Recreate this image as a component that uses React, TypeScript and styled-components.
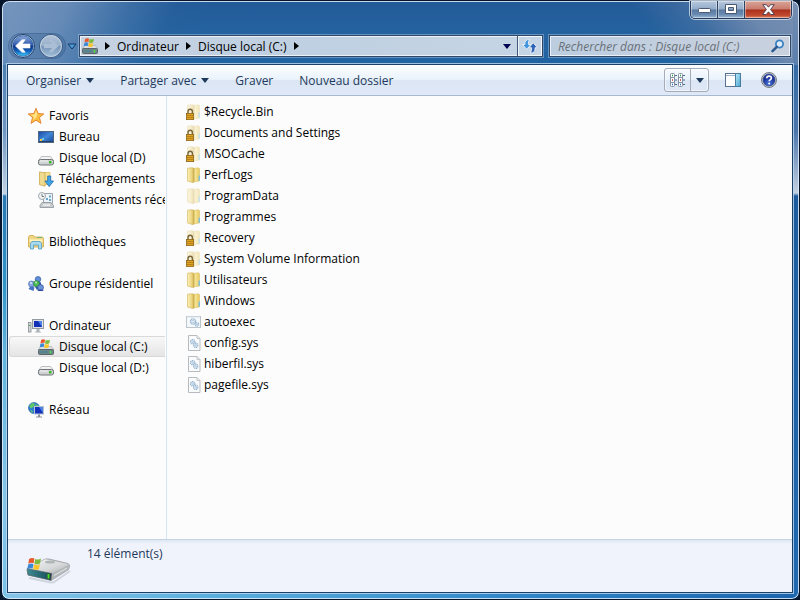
import React from "react";
import styled, { createGlobalStyle, css } from "styled-components";

const GlobalStyle = createGlobalStyle`
  * { box-sizing: border-box; }
  body { margin: 0; background: #06152c; font-family: "Open Sans", "Noto Sans", sans-serif; font-size: 12px; color: #000; }
  button, input { font: inherit; color: inherit; margin: 0; }
  button { padding: 0; border: 0; background: none; }
  svg { display: block; flex: none; }
`;

const Window = styled.div`
  display: flex;
  flex-direction: column;
  min-height: 100vh;
  margin-left: 1px;
  padding: 0 6px 6px 5px;
  border: 1px solid #07142a;
  border-radius: 8px;
  box-shadow: inset 0 0 0 1px rgba(226, 238, 250, 0.85);
  background:
    linear-gradient(to bottom, rgba(112, 144, 184, 0) 0, #5c89b9 90px, #6f96c1 130px, #c3d3e4 193px, #2777b3 195px, #3195c6 285px, #5fb4dd 350px, #86c5e8 500px, #79c0e8 100%) left / 6px 100% no-repeat,
    linear-gradient(to bottom, rgba(111, 136, 174, 0) 0, #4a75ab 130px, #c3d1e2 192px, #1c5c9e 195px, #2069b0 100%) right / 6px 100% no-repeat,
    linear-gradient(to right, #86c5e8 0, #5cb0de 25%, #2f86c8 65%, #1c64ae 100%) bottom / 100% 7px no-repeat,
    linear-gradient(115deg, #7595bd 0, rgba(110, 144, 186, 0.9) 60px, rgba(80, 125, 175, 0.6) 115px, rgba(45, 100, 160, 0.2) 160px, rgba(32, 90, 152, 0) 195px) left top / 300px 64px no-repeat,
    linear-gradient(50deg, rgba(32, 90, 152, 0) 140px, rgba(85, 120, 165, 0.5) 180px, rgba(112, 138, 175, 0.95) 225px, #7890b2 270px) right top / 300px 64px no-repeat,
    linear-gradient(to bottom, #235a98, #24639f 34px, #2063a2 64px);
`;

const TitleBar = styled.header`
  display: flex;
  justify-content: flex-end;
  height: 33px;
  padding-right: 1px;
`;

const CaptionButtons = styled.div`
  display: flex;
  height: 18px;
  border: 1px solid #273c5c;
  border-top: 0;
  border-radius: 0 0 5px 5px;
  box-shadow: 0 0 0 1px rgba(220, 232, 245, 0.75);
  overflow: hidden;
`;

const CaptionButton = styled.button<{ $close?: boolean }>`
  display: grid;
  place-items: center;
  width: ${(p) => (p.$close ? 46 : 27)}px;
  border-right: ${(p) => (p.$close ? "0" : "1px solid #2c4364")};
  box-shadow: inset 0 0 0 1px rgba(255, 255, 255, 0.4);
  background: ${(p) =>
    p.$close
      ? "linear-gradient(#d9a599 0, #c97b6c 48%, #a92f1c 52%, #c24a30 85%, #de8a6c 100%)"
      : "linear-gradient(#b6c8dd 0, #93abc9 48%, #58789f 52%, #6b8cb2 80%, #9bb8d4 100%)"};
`;

const NavBar = styled.div`
  display: flex;
  align-items: center;
  height: 30px;
  padding: 0 2px 6px;
`;

const HistoryButtons = styled.div`
  display: flex;
  align-items: center;
  gap: 2px;
  width: 70px;
  height: 24px;
`;

const History = styled.div`
  display: flex;
  gap: 4px;
  padding: 0 2px;
  border-radius: 13px;
  box-shadow: 0 0 0 1px rgba(30, 66, 112, 0.4);
  background: rgba(50, 95, 145, 0.3);
`;

const fieldBox = css`
  display: flex;
  align-items: stretch;
  height: 22px;
  min-width: 0;
  border: 1px solid #30486a;
  box-shadow: 0 0 0 1px rgba(180, 205, 230, 0.45), inset 0 0 0 1px rgba(245, 249, 253, 0.8);
`;

const AddressBar = styled.nav`
  ${fieldBox}
  flex: 1;
  margin-right: 6px;
  background: linear-gradient(to right, #c6d2e1, #bfd0e2 50%, #c5d5e5);
`;

const Crumbs = styled.div`
  display: flex;
  flex: 1;
  align-items: center;
  min-width: 0;
  padding-left: 2px;
`;

const Crumb = styled.button`
  padding: 0 7px;
  white-space: nowrap;
`;

const FieldButton = styled.button<{ $divided?: boolean }>`
  display: grid;
  place-items: center;
  width: ${(p) => (p.$divided ? 25 : 20)}px;
  border-left: ${(p) => (p.$divided ? "1px solid #43597a" : "0")};
  box-shadow: ${(p) => (p.$divided ? "inset 0 0 0 1px rgba(245, 249, 253, 0.8)" : "none")};
`;

const SearchBox = styled.form`
  ${fieldBox}
  flex: 0 1 242px;
  padding-right: 2px;
  background: linear-gradient(to right, #bccde0, #c9d1de);
`;

const SearchInput = styled.input`
  flex: 1;
  min-width: 0;
  padding: 0 0 0 8px;
  border: 0;
  outline: 0;
  background: none;
  &::placeholder {
    color: #6a7178;
    font-style: italic;
    opacity: 1;
  }
`;

const Client = styled.div`
  display: flex;
  flex: 1;
  flex-direction: column;
  border: 1px solid #1c4168;
  box-shadow: 0 0 0 1px rgba(190, 216, 240, 0.8);
  background: #fcfcfc;
`;

const Toolbar = styled.div`
  display: flex;
  align-items: center;
  height: 31px;
  padding: 0 11px 0 5px;
  border-bottom: 1px solid #a9b9d1;
  background: linear-gradient(#fdfeff 0, #e9f2fb 48%, #dbe6f4 52%, #dfe8f6 100%);
  color: #1e395b;
`;

const Command = styled.button`
  display: flex;
  align-items: center;
  gap: 5px;
  padding: 0 13px;
  white-space: nowrap;
`;

const ToolGroup = styled.div`
  display: flex;
  align-items: center;
  gap: 12px;
  margin-left: auto;
`;

const ViewSplit = styled.div`
  display: flex;
  height: 24px;
  border: 1px solid #a4acba;
  border-radius: 3px;
  box-shadow: inset 0 0 0 1px rgba(255, 255, 255, 0.6);
`;

const ViewButton = styled.button<{ $divided?: boolean }>`
  display: grid;
  place-items: center;
  width: ${(p) => (p.$divided ? 18 : 25)}px;
  border-left: ${(p) => (p.$divided ? "1px solid #a4acba" : "0")};
`;

const IconButton = styled.button`
  display: grid;
  place-items: center;
  width: 24px;
  height: 24px;
`;

const Body = styled.div`
  display: flex;
  flex: 1;
`;

const Sidebar = styled.nav`
  display: flex;
  flex: 0 0 159px;
  flex-direction: column;
  gap: 21px;
  padding: 9px 1px 0;
  border-right: 1px solid #d6e5f5;
  overflow: hidden;
`;

const PlainList = styled.ul`
  margin: 0;
  padding: 0;
  list-style: none;
`;

const TreeItem = styled.a<{ $child?: boolean; $selected?: boolean }>`
  display: flex;
  align-items: center;
  gap: 5px;
  height: 21px;
  padding-left: ${(p) => (p.$child ? 28 : 18)}px;
  border: 1px solid ${(p) => (p.$selected ? "#d9d9d9" : "transparent")};
  border-right: 0;
  border-radius: 3px 0 0 3px;
  background: ${(p) => (p.$selected ? "linear-gradient(#f8f8f8, #e5e5e5)" : "none")};
  color: #000;
  text-decoration: none;
  white-space: nowrap;
  overflow: hidden;
`;

const Files = styled(PlainList)`
  flex: 1;
  padding: 5px 0 0 19px;
`;

const FileLink = styled.a`
  display: inline-flex;
  align-items: center;
  gap: 2px;
  height: 21px;
  color: #000;
  text-decoration: none;
  white-space: nowrap;
  vertical-align: top;
`;

const FileRow = styled.li`
  height: 21px;
`;

const Details = styled.footer`
  display: flex;
  gap: 15px;
  height: 53px;
  padding: 4px 18px 0;
  border-top: 1px solid #c5d3e4;
  background: linear-gradient(#dce6f2 0, #f0f3fb 4px);
  color: #1e395b;
  line-height: 20px;
`;

const DetailsIcon = styled.div`
  padding-top: 12px;
`;

const Triangle = ({ color = "#1e395b" }: { color?: string }) => (
  <svg width="8" height="5" viewBox="0 0 8 5"><path d="M0 0h8L4 5z" fill={color} /></svg>
);

const CrumbArrow = () => (
  <svg width="5" height="8" viewBox="0 0 5 8"><path d="M0 0v8l5-4z" fill="#000" /></svg>
);

const BackIcon = () => (
  <svg width="24" height="24" viewBox="0 0 24 24">
    <defs>
      <linearGradient id="backFill" x1="0" y1="0" x2="0" y2="1">
        <stop offset="0" stopColor="#8aa9da" /><stop offset=".46" stopColor="#2c57ad" />
        <stop offset=".5" stopColor="#0b2f80" /><stop offset=".75" stopColor="#1262bd" /><stop offset="1" stopColor="#3fd0fa" />
      </linearGradient>
    </defs>
    <circle cx="12" cy="12" r="11.5" fill="#c5daee" stroke="#1d3c6c" />
    <circle cx="12" cy="12" r="10.2" fill="url(#backFill)" stroke="#1b4a92" strokeWidth=".6" />
    <path d="M4.500 12l6.500-6.300h3.200L11.200 10H19v4h-7.800l3 4.300H11z" fill="#fff" stroke="#fff" strokeWidth=".6" />
  </svg>
);

const ForwardIcon = () => (
  <svg width="24" height="24" viewBox="0 0 24 24">
    <defs>
      <linearGradient id="forwardFill" x1="0" y1="0" x2="0" y2="1">
        <stop offset="0" stopColor="#b3c4d8" /><stop offset=".48" stopColor="#98b0cb" />
        <stop offset=".52" stopColor="#7896b9" /><stop offset="1" stopColor="#a3c0da" />
      </linearGradient>
    </defs>
    <circle cx="12" cy="12" r="11.5" fill="url(#forwardFill)" stroke="#36557e" />
    <circle cx="12" cy="12" r="10.5" fill="none" stroke="#c2d2e3" />
    <path d="M19.500 12L13 5.700h-3l3 4.300H5v4h8l-3 4.300h3z" fill="#aabfd5" />
  </svg>
);

const RecentIcon = () => (
  <svg width="10" height="7" viewBox="0 0 10 7"><path d="M1 1h8L5 6z" fill="#4d9ed8" stroke="#12376b" /></svg>
);

const MinimizeIcon = () => (
  <svg width="13" height="9" viewBox="0 0 13 9"><rect x=".5" y="3.500" width="12" height="4" rx="1" fill="#fff" stroke="#4b5870" /></svg>
);

const MaximizeIcon = () => (
  <svg width="12" height="11" viewBox="0 0 12 11">
    <path fillRule="evenodd" d="M.5.5h11v9H.5zM3.500 3.500v3h5v-3z" fill="#fff" stroke="#4b5870" />
  </svg>
);

const CloseIcon = () => (
  <svg width="13" height="12" viewBox="0 0 13 12">
    <path d="M.8.7h3.600l2.100 2.500L8.600.7h3.600L8.600 5.500l3.800 5H8.700L6.500 7.800l-2.200 2.700H.6l3.800-5z" fill="#fff" stroke="#574154" />
  </svg>
);

const RefreshIcon = () => (
  <svg width="16" height="16" viewBox="0 0 16 16">
    <path d="M7.500 1.500C4 1.500 2.700 3.500 2.900 6.500H.6L4.700 11.300 8.900 6.500H6.400C6.200 4.500 6.600 3 7.500 1.500z" fill="#3e94de" stroke="#f1f7fc" strokeWidth=".8" />
    <path d="M8.500 15c3.500 0 4.700-2 4.500-5.300h2.400L11.200 4.800 7 9.700h2.600c.2 2-.2 3.700-1.100 5.300z" fill="#2d62b5" stroke="#f1f7fc" strokeWidth=".8" />
  </svg>
);

const SearchIcon = () => (
  <svg width="14" height="14" viewBox="0 0 14 14">
    <circle cx="8.500" cy="5" r="3.600" fill="#dcecf8" stroke="#3a80c0" strokeWidth="1.800" />
    <path d="M5.800 7.800L1.500 12.200" stroke="#28588e" strokeWidth="2.400" strokeLinecap="round" />
  </svg>
);

const ViewIcon = () => (
  <svg width="16" height="14" viewBox="0 0 16 14">
    {[0, 8].map((x) => (
      <g key={x} transform={`translate(${x} 0)`}>
        <rect x=".5" y=".5" width="4" height="13" rx="1" fill="#fff" stroke="#8291a5" />
        <path d="M1 4.500h3M1 9.500h3" stroke="#8291a5" />
        <path d="M5 2.500h2M5 7h2M5 11.500h2" stroke="#536b89" />
        <path d="M2 2.500h1" stroke="#31953a" strokeWidth="1.500" />
        <path d="M2 7h1" stroke="#d0302d" strokeWidth="1.500" />
        <path d="M2 11.500h1" stroke="#2e68bb" strokeWidth="1.500" />
      </g>
    ))}
  </svg>
);

const PreviewIcon = () => (
  <svg width="16" height="14" viewBox="0 0 16 14">
    <defs><linearGradient id="pane" x2="1" y2="1"><stop stopColor="#bfe8f7" /><stop offset="1" stopColor="#44a7d2" /></linearGradient></defs>
    <rect x=".5" y=".5" width="15" height="13" fill="#fff" stroke="#587291" />
    <path d="M1 2.500h9" stroke="#a0b5ca" />
    <rect x="10.500" y=".5" width="5" height="13" fill="url(#pane)" stroke="#4a7c9f" />
  </svg>
);

const HelpIcon = () => (
  <svg width="16" height="16" viewBox="0 0 16 16">
    <defs><radialGradient id="help" cy=".8"><stop stopColor="#4775dd" /><stop offset="1" stopColor="#1d3697" /></radialGradient></defs>
    <circle cx="8" cy="8" r="7.500" fill="#c5c8cc" stroke="#777d86" />
    <circle cx="8" cy="8" r="6" fill="url(#help)" stroke="#27408a" strokeWidth=".6" />
    <path d="M5.700 6.200C5.800 3.300 10.400 3.400 10.400 6c0 1.600-2.200 1.700-2.200 3.300" fill="none" stroke="#fff" strokeWidth="1.700" />
    <circle cx="8.200" cy="11.500" r="1" fill="#fff" />
  </svg>
);

const Flag = () => (
  <g>
    <path d="M1.500 1.500Q3.500.2 5.300 1.200L4.700 4.600Q2.800 3.800.9 5z" fill="#e8582c" />
    <path d="M5.900 1.400Q8 2.400 10 1.200L9.300 4.800Q7.300 5.900 5.200 4.900z" fill="#7dba3c" />
    <path d="M.8 5.500Q2.700 4.300 4.600 5.200L4 8.600Q2.200 7.800.2 9z" fill="#3c87d6" />
    <path d="M5.100 5.500Q7.200 6.500 9.200 5.400L8.500 9Q6.500 10 4.500 9z" fill="#fbc52c" />
  </g>
);

const SystemDrive = () => (
  <svg width="16" height="16" viewBox="0 0 16 16">
    <path d="M2.500 7.500h11l2.300 3.500H.2z" fill="#dcdedf" stroke="#9b9fa1" strokeWidth=".5" />
    <rect x=".5" y="10.500" width="15" height="5" rx="1" fill="#6b858b" stroke="#5b666b" />
    <path d="M2 13h8" stroke="#3c8494" />
    <path d="M12.500 12v2.500" stroke="#46e13b" strokeWidth="1.500" />
    <g transform="translate(1.500 -.5) scale(1.050 1)"><Flag /></g>
  </svg>
);

const Drive = () => (
  <svg width="16" height="16" viewBox="0 0 16 16">
    <path d="M3.500 6.500h9l3 4H.5z" fill="#f4f4f4" stroke="#bcbebf" />
    <rect x=".5" y="9.500" width="15" height="5.500" rx="2" fill="#cfd2d2" stroke="#6f7377" />
    <path d="M2 11h8" stroke="#f5f5f5" />
    <rect x="11" y="11" width="2.500" height="2.500" fill="#37bd23" />
  </svg>
);

const Star = () => (
  <svg width="16" height="16" viewBox="0 0 16 16">
    <path d="M8 .3l2.200 5.200 5.600.4-4.300 3.600 1.500 5.900L8 12.200l-5 3.200 1.500-5.900L.2 5.900l5.600-.4z" fill="#fbbf3e" stroke="#e08030" strokeWidth=".9" strokeLinejoin="round" />
    <path d="M8 2.500l1.400 4L8 10 5 12l1-3.200L2.500 6.700l4-.3z" fill="#ffe48c" />
  </svg>
);

const Desktop = () => (
  <svg width="16" height="16" viewBox="0 0 16 16">
    <defs><linearGradient id="desk" x2="1" y2="1"><stop stopColor="#1a4aa6" /><stop offset=".5" stopColor="#4186d8" /><stop offset="1" stopColor="#164492" /></linearGradient></defs>
    <rect x=".5" y="2.500" width="15" height="11" fill="url(#desk)" stroke="#50657f" />
    <path d="M1 12.500h14" stroke="#23416d" />
    <path d="M2 10h2v2H2z" fill="#f4c746" /><path d="M4 9h2v2H4z" fill="#67c8e8" />
  </svg>
);

const Downloads = () => (
  <svg width="16" height="16" viewBox="0 0 16 16">
    <path d="M6 1.500h6v12H6z" fill="#f6e396" stroke="#d9bb60" strokeWidth=".8" />
    <path d="M1.500.9l5.500 1v13.300l-5.500-1.500z" fill="#efdb8f" stroke="#cda94d" strokeWidth=".8" />
    <path d="M9.700 5h3v5h2.800L11.200 15.600 7 10h2.700z" fill="#42a5e5" stroke="#1b68ad" strokeWidth=".8" />
  </svg>
);

const Recent = () => (
  <svg width="16" height="16" viewBox="0 0 16 16">
    <path d="M5.500 1.500h9v10h-9z" fill="#edf5fb" stroke="#98a3ad" />
    <path d="M8 6h2v2H8zM11 3.500h2v2h-2zM11 7h2v2h-2z" fill="#69a6cf" />
    <circle cx="4" cy="4" r="3.500" fill="#f1f3f4" stroke="#a1a8ae" /><path d="M4 2v2.500h2" fill="none" stroke="#59646f" strokeWidth=".8" />
    <path d="M4 10.500h9l2.500 3v2H2v-2z" fill="#c9cdd0" stroke="#8b9196" strokeWidth=".8" /><path d="M5 13h7" stroke="#fff" />
  </svg>
);

const Library = () => (
  <svg width="16" height="16" viewBox="0 0 16 16">
    <path d="M.5 3l1-1.500h4L6.500 3h8l1 1v9h-15z" fill="#f0d785" stroke="#cfa746" strokeWidth=".8" />
    <path d="M1.500 5.500h13v2h-13z" fill="#fff4c1" /><path d="M9 3.500h5" stroke="#75b776" />
    <path d="M2.500 15V9.500l1.500-2h8l1.500 2V15H10.500v-4h-5v4z" fill="#a8dbf0" stroke="#4f9cc2" strokeWidth=".8" />
  </svg>
);

const HomeGroup = () => (
  <svg width="16" height="16" viewBox="0 0 16 16">
    <circle cx="10" cy="3.300" r="2.800" fill="#608fd8" stroke="#2b4f9e" strokeWidth=".6" />
    <path d="M5.500 8.500Q5.500 5 9 5l4 1.500v5L9 14z" fill="#3159ac" />
    <circle cx="3.500" cy="8" r="3" fill="#86a8e0" stroke="#3b60b0" strokeWidth=".6" />
    <path d="M.5 13q2-4 6-1.500l-1 3.500z" fill="#4772c2" />
    <circle cx="8.500" cy="7.700" r="3" fill="#4ebb54" stroke="#218036" strokeWidth=".6" />
    <circle cx="12.500" cy="11.500" r="3" fill="#6b91d6" stroke="#243f95" strokeWidth=".6" />
    <path d="M9 15q3.500-3 7 0z" fill="#25439b" /><circle cx="3" cy="7" r="1" fill="#dae7fa" /><circle cx="8" cy="6.500" r="1" fill="#b9edb6" />
  </svg>
);

const Computer = () => (
  <svg width="16" height="16" viewBox="0 0 16 16">
    <rect x=".5" y="4.500" width="2.500" height="9.500" fill="#d5d8db" stroke="#858b90" strokeWidth=".8" /><path d="M1 7.500h1.500" stroke="#49ad4b" />
    <rect x="4.500" y="1.500" width="11" height="9" fill="#dfe2e5" stroke="#929aa2" />
    <path d="M6 3h8v6H6z" fill="#1230b7" /><path d="M10 3h4v6z" fill="#4f83e6" />
    <path d="M8.500 11h3v2l2 1.500h-7l2-1.500z" fill="#adb3b8" />
  </svg>
);

const Network = () => (
  <svg width="16" height="16" viewBox="0 0 16 16">
    <circle cx="6" cy="6" r="5.500" fill="#2c7fd7" stroke="#1b519e" strokeWidth=".6" />
    <path d="M1 4l3-3 3 .5-1 3-3 2zM8 2l3 2-2 2-2-1zM2 8l3 1-1 2z" fill="#62c76a" />
    <rect x="6.500" y="4.500" width="9" height="7.500" fill="#1331ba" stroke="#b7c2d1" /><path d="M11 5h4v6z" fill="#4c83e5" />
    <path d="M10 12.500h2v2h2v1H8v-1h2z" fill="#888f98" />
  </svg>
);

const Folder = ({ faded, locked }: { faded?: boolean; locked?: boolean }) => (
  <svg width="16" height="16" viewBox="0 0 16 16">
    <defs>
      <linearGradient id="folderLeft" x2="1"><stop stopColor="#fbf1b8" /><stop offset=".7" stopColor="#e9d17b" /><stop offset="1" stopColor="#c9a94b" /></linearGradient>
      <linearGradient id="folderRight" x2="1"><stop stopColor="#cdb154" /><stop offset=".4" stopColor="#f6e596" /><stop offset="1" stopColor="#e6c75f" /></linearGradient>
    </defs>
    <g opacity={faded ? 0.42 : 1}>
      <path d="M6.500 1.500l6-.7 1 1V14l-7 1z" fill="url(#folderRight)" stroke="#dcbf62" strokeWidth=".6" />
      <path d="M12.500 8.500H14v5l-1.500.5z" fill="#7dbfe0" />
      <path d="M1.500 1.200l5-.5 1.500 1v13.500l-1.500.3-5-1.500z" fill="url(#folderLeft)" stroke="#d2b256" strokeWidth=".6" />
    </g>
    {locked && (
      <g>
        <path d="M2 10V7.500a2.200 2.200 0 0 1 4.400 0V10" fill="none" stroke="#77643a" strokeWidth="1.400" />
        <rect x=".4" y="9.400" width="7.200" height="6.200" fill="#dfa522" stroke="#8e641b" strokeWidth=".8" />
        <path d="M1 11.500h6M1 13.500h6" stroke="#a97618" strokeWidth=".8" />
      </g>
    )}
  </svg>
);

const Gear = ({ x, y, r }: { x: number; y: number; r: number }) => (
  <g stroke="#8fafcc" fill="#edf4fa">
    <circle cx={x} cy={y} r={r} strokeWidth="1.100" strokeDasharray="1.200 .5" />
    <circle cx={x} cy={y} r={r - 1.300} strokeWidth=".6" />
  </g>
);

const Batch = () => (
  <svg width="16" height="16" viewBox="0 0 16 16">
    <rect x=".5" y="2.500" width="14" height="11" fill="#f6f9fb" stroke="#bdc5cc" /><path d="M1 3h13" stroke="#dbe3eb" />
    <Gear x={7} y={7.500} r={2.700} /><Gear x={11} y={10.500} r={1.800} />
  </svg>
);

const SystemFile = () => (
  <svg width="16" height="16" viewBox="0 0 16 16">
    <path d="M2.500.5h8.500l3 3v12H2.500z" fill="#fafbfc" stroke="#b7bbbf" /><path d="M11 .5v3h3" fill="#e5e8ea" stroke="#c3c7ca" />
    <Gear x={6.700} y={6.700} r={2.200} /><Gear x={9.700} y={10.300} r={2.200} />
  </svg>
);

const LargeDrive = () => (
  <svg width="46" height="30" viewBox="0 0 46 30">
    <defs>
      <linearGradient id="top" x2="1" y2="1"><stop stopColor="#f4f5f5" /><stop offset=".6" stopColor="#d5d7d8" /><stop offset="1" stopColor="#a9adb0" /></linearGradient>
      <linearGradient id="front" x2="1"><stop stopColor="#3f8b92" /><stop offset=".7" stopColor="#215d68" /><stop offset="1" stopColor="#343e40" /></linearGradient>
    </defs>
    <path d="M3 22l22 4.500q2 .3 4-1L44 15" fill="none" stroke="#cfd5df" strokeWidth="2" />
    <path d="M1 14L18 3.500q2-1 5-.5l19 4.500q2 1 1.500 3l-1 3L26 24l-24-5z" fill="#c6c9ca" stroke="#8f9496" strokeWidth=".7" />
    <path d="M2 13L19 3.300l23.500 5L26 17.500z" fill="url(#top)" />
    <path d="M1 12.500l25 5-.8 7L2 19z" fill="url(#front)" stroke="#556468" strokeWidth=".6" />
    <path d="M26 17.500L43 9l-.7 5L25.500 24.500z" fill="#b2b6b8" /><path d="M28 19.500l13-7.500" stroke="#e9ebec" />
    <ellipse cx="24" cy="6" rx="5" ry="1.600" fill="#b0b5b8" />
    <path d="M22.500 18v4.500" stroke="#43e51c" strokeWidth="1.800" />
    <g transform="translate(1 1) scale(1.400 1.350)"><Flag /></g>
  </svg>
);

interface TreeEntry {
  label: string;
  icon: React.ReactNode;
  selected?: boolean;
  children?: TreeEntry[];
}

const tree: TreeEntry[] = [
  { label: "Favoris", icon: <Star />, children: [
    { label: "Bureau", icon: <Desktop /> },
    { label: "Disque local (D)", icon: <Drive /> },
    { label: "Téléchargements", icon: <Downloads /> },
    { label: "Emplacements récents", icon: <Recent /> },
  ] },
  { label: "Bibliothèques", icon: <Library /> },
  { label: "Groupe résidentiel", icon: <HomeGroup /> },
  { label: "Ordinateur", icon: <Computer />, children: [
    { label: "Disque local (C:)", icon: <SystemDrive />, selected: true },
    { label: "Disque local (D:)", icon: <Drive /> },
  ] },
  { label: "Réseau", icon: <Network /> },
];

const files: [string, React.ReactNode][] = [
  ["$Recycle.Bin", <Folder faded locked />],
  ["Documents and Settings", <Folder faded locked />],
  ["MSOCache", <Folder faded locked />],
  ["PerfLogs", <Folder />],
  ["ProgramData", <Folder faded />],
  ["Programmes", <Folder />],
  ["Recovery", <Folder faded locked />],
  ["System Volume Information", <Folder faded locked />],
  ["Utilisateurs", <Folder />],
  ["Windows", <Folder />],
  ["autoexec", <Batch />],
  ["config.sys", <SystemFile />],
  ["hiberfil.sys", <SystemFile />],
  ["pagefile.sys", <SystemFile />],
];

export default function App() {
  return (
    <>
      <GlobalStyle />
      <Window>
        <TitleBar>
          <CaptionButtons>
            <CaptionButton aria-label="Réduire"><MinimizeIcon /></CaptionButton>
            <CaptionButton aria-label="Agrandir"><MaximizeIcon /></CaptionButton>
            <CaptionButton $close aria-label="Fermer"><CloseIcon /></CaptionButton>
          </CaptionButtons>
        </TitleBar>
        <NavBar>
          <HistoryButtons>
            <History>
              <button aria-label="Précédent"><BackIcon /></button>
              <button aria-label="Suivant"><ForwardIcon /></button>
            </History>
            <button aria-label="Pages récentes"><RecentIcon /></button>
          </HistoryButtons>
          <AddressBar aria-label="Adresse">
            <Crumbs>
              <SystemDrive />
              <Crumb aria-label="Racine"><CrumbArrow /></Crumb>
              <button>Ordinateur</button>
              <Crumb aria-label="Ordinateur, sous-dossiers"><CrumbArrow /></Crumb>
              <button>Disque local (C:)</button>
              <Crumb aria-label="Disque local, sous-dossiers"><CrumbArrow /></Crumb>
            </Crumbs>
            <FieldButton aria-label="Emplacements précédents"><Triangle color="#000050" /></FieldButton>
            <FieldButton $divided aria-label="Actualiser"><RefreshIcon /></FieldButton>
          </AddressBar>
          <SearchBox role="search">
            <SearchInput aria-label="Rechercher" placeholder="Rechercher dans : Disque local (C:)" />
            <FieldButton type="button" aria-label="Lancer la recherche"><SearchIcon /></FieldButton>
          </SearchBox>
        </NavBar>
        <Client>
          <Toolbar>
            <Command>Organiser <Triangle /></Command>
            <Command>Partager avec <Triangle /></Command>
            <Command>Graver</Command>
            <Command>Nouveau dossier</Command>
            <ToolGroup>
              <ViewSplit>
                <ViewButton aria-label="Changer l'affichage"><ViewIcon /></ViewButton>
                <ViewButton $divided aria-label="Options d'affichage"><Triangle /></ViewButton>
              </ViewSplit>
              <IconButton aria-label="Volet de visualisation"><PreviewIcon /></IconButton>
              <IconButton aria-label="Aide"><HelpIcon /></IconButton>
            </ToolGroup>
          </Toolbar>
          <Body>
            <Sidebar aria-label="Navigation">
              {tree.map((group) => (
                <PlainList key={group.label}>
                  <li><TreeItem href="#">{group.icon}{group.label}</TreeItem></li>
                  {group.children?.map((item) => (
                    <li key={item.label}>
                      <TreeItem href="#" $child $selected={item.selected}>{item.icon}{item.label}</TreeItem>
                    </li>
                  ))}
                </PlainList>
              ))}
            </Sidebar>
            <Files>
              {files.map(([name, icon]) => (
                <FileRow key={name}><FileLink href="#">{icon}{name}</FileLink></FileRow>
              ))}
            </Files>
          </Body>
          <Details>
            <DetailsIcon><LargeDrive /></DetailsIcon>
            <span>14 élément(s)</span>
          </Details>
        </Client>
      </Window>
    </>
  );
}
